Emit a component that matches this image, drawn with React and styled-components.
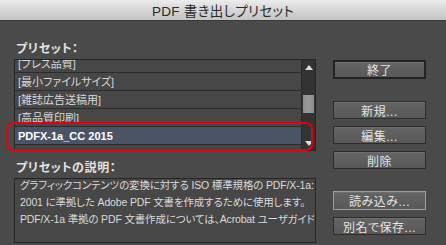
import React from 'react'
import styled, { createGlobalStyle } from 'styled-components'

const GlobalStyle = createGlobalStyle`
  html, body { margin: 0; padding: 0; background: #4a4a4a; }
  body {
    font-family: "Liberation Sans", "Noto Sans CJK JP", sans-serif;
    -webkit-font-smoothing: antialiased;
  }
`

const presets = [
  { name: '[プレス品質]' },
  { name: '[最小ファイルサイズ]' },
  { name: '[雑誌広告送稿用]' },
  { name: '[高品質印刷]' },
  { name: 'PDFX-1a_CC 2015', selected: true },
  { name: '' },
]

const description = [
  'グラフィックコンテンツの変換に対する ISO 標準規格の PDF/X-1a:',
  '2001 に準拠した Adobe PDF 文書を作成するために使用します。',
  'PDF/X-1a 準拠の PDF 文書作成については、Acrobat ユーザガイド',
]

const Window = styled.div`
  width: 446px;
  height: 245px;
  overflow: hidden;
  display: flex;
  flex-direction: column;
  background: #4a4a4a;
  font-family: "Liberation Sans", "Noto Sans CJK JP", sans-serif;
`

const TitleBar = styled.div`
  height: 20px;
  flex: none;
  display: flex;
  align-items: center;
  justify-content: center;
  background: linear-gradient(#ececec, #d2d2d2 60%, #c4c4c4);
  border-bottom: 1px solid #3a3a3a;
  color: #2a2a2a;
  font-size: 13.5px;
  letter-spacing: 0.3px;
  font-feature-settings: "palt";
`

const Body = styled.div`
  display: flex;
  flex: 1;
`

const LeftCol = styled.div`
  position: relative;
  margin-left: 14px;
  width: 302px;
  display: flex;
  flex-direction: column;
  padding-top: 20px;
`

const SectionLabel = styled.div`
  height: 16px;
  line-height: 16px;
  padding-left: 2px;
  margin-top: ${p => p.$gap || 0}px;
  color: #e2e2e2;
  font-size: 12px;
  font-weight: bold;
  letter-spacing: 0.6px;
  font-feature-settings: "palt";
`

const Box = styled.div`
  position: relative;
  display: flex;
  margin-top: ${p => p.$gap || 0}px;
  height: ${p => p.$h}px;
  border: 1px solid #262626;
  background: #474747;
  overflow: hidden;
  flex: none;
`

const Rows = styled.div`
  flex: 1;
  margin-top: -5px;
`

const Row = styled.div`
  height: 16px;
  padding-top: 1px;
  line-height: 17px;
  border-bottom: 1px solid #2c2c2c;
  padding-left: 3px;
  font-size: 11px;
  color: ${p => (p.$selected ? '#ffffff' : '#d8d8d8')};
  font-weight: ${p => (p.$selected ? 'bold' : 'normal')};
  background: ${p => (p.$selected ? '#4b5367' : 'transparent')};
  font-feature-settings: "palt";
  white-space: nowrap;
`

const DescText = styled.div`
  flex: 1;
  padding: 0 0 0 5px;
  margin-top: -2px;
  font-size: 10.5px;
  letter-spacing: -0.15px;
  line-height: 17px;
  color: #dadada;
  font-feature-settings: "palt";
  white-space: nowrap;
`

const Scroll = styled.div`
  width: 13px;
  flex: none;
  background: #333;
  border-left: 1px solid #2a2a2a;
  display: flex;
  flex-direction: column;
  align-items: center;
  padding: 5px 0 4px;
`

const Arrow = styled.div`
  width: 0;
  height: 0;
  border-left: 4px solid transparent;
  border-right: 4px solid transparent;
  ${p =>
    p.$down
      ? 'border-top: 5px solid #dcdcdc;'
      : 'border-bottom: 5px solid #dcdcdc;'}
`

const Track = styled.div`
  flex: 1;
  align-self: stretch;
  padding-top: ${p => p.$offset}px;
`

const Thumb = styled.div`
  height: ${p => p.$h}px;
  margin: 0 1px;
  background: linear-gradient(90deg, #8c8c8c, #9a9a9a, #8c8c8c);
`

const Highlight = styled.div`
  position: absolute;
  left: -8px;
  top: 101px;
  width: 303px;
  height: 25px;
  border: 2px solid #e60012;
  border-radius: 7px;
  pointer-events: none;
`

const RightCol = styled.div`
  margin-left: 17px;
  width: 93px;
  display: flex;
  flex-direction: column;
  padding-top: 39px;
`

const Button = styled.div`
  height: ${p => (p.$default ? 15 : p.$focus ? 17 : 16)}px;
  margin-top: ${p => p.$gap || 0}px;
  display: flex;
  align-items: center;
  justify-content: center;
  border: ${p =>
    p.$default ? '2px solid #232323' : p.$focus ? '1px solid #ee8a23' : '1px solid #2c2c2c'};
  background: linear-gradient(#646464, #585858);
  box-shadow: inset 0 1px 0 rgba(255, 255, 255, 0.08);
  color: #e4e4e4;
  font-size: 12px;
  letter-spacing: 0.5px;
  font-feature-settings: "palt";
`

const ScrollBar = ({ offset, thumb }) => (
  <Scroll>
    <Arrow />
    <Track $offset={offset}>
      <Thumb $h={thumb} />
    </Track>
    <Arrow $down />
  </Scroll>
)

export default function App() {
  return (
    <>
      <GlobalStyle />
      <Window>
        <TitleBar>PDF 書き出しプリセット</TitleBar>
        <Body>
          <LeftCol>
            <SectionLabel>プリセット：</SectionLabel>
            <Box $gap={2} $h={90}>
              <Rows>
                {presets.map((p, i) => (
                  <Row key={i} $selected={p.selected}>
                    {p.name}
                  </Row>
                ))}
              </Rows>
              <ScrollBar offset={25} thumb={18} />
            </Box>
            <Highlight />
            <SectionLabel $gap={9}>プリセットの説明：</SectionLabel>
            <Box $gap={2} $h={63}>
              <DescText>
                {description.map((line, i) => (
                  <div key={i}>{line}</div>
                ))}
              </DescText>
              <ScrollBar offset={5} thumb={10} />
            </Box>
          </LeftCol>
          <RightCol>
            <Button $default>終了</Button>
            <Button $gap={22}>新規...</Button>
            <Button $gap={7}>編集...</Button>
            <Button $gap={7}>削除</Button>
            <Button $gap={22} $focus>読み込み...</Button>
            <Button $gap={7}>別名で保存...</Button>
          </RightCol>
        </Body>
      </Window>
    </>
  )
}
